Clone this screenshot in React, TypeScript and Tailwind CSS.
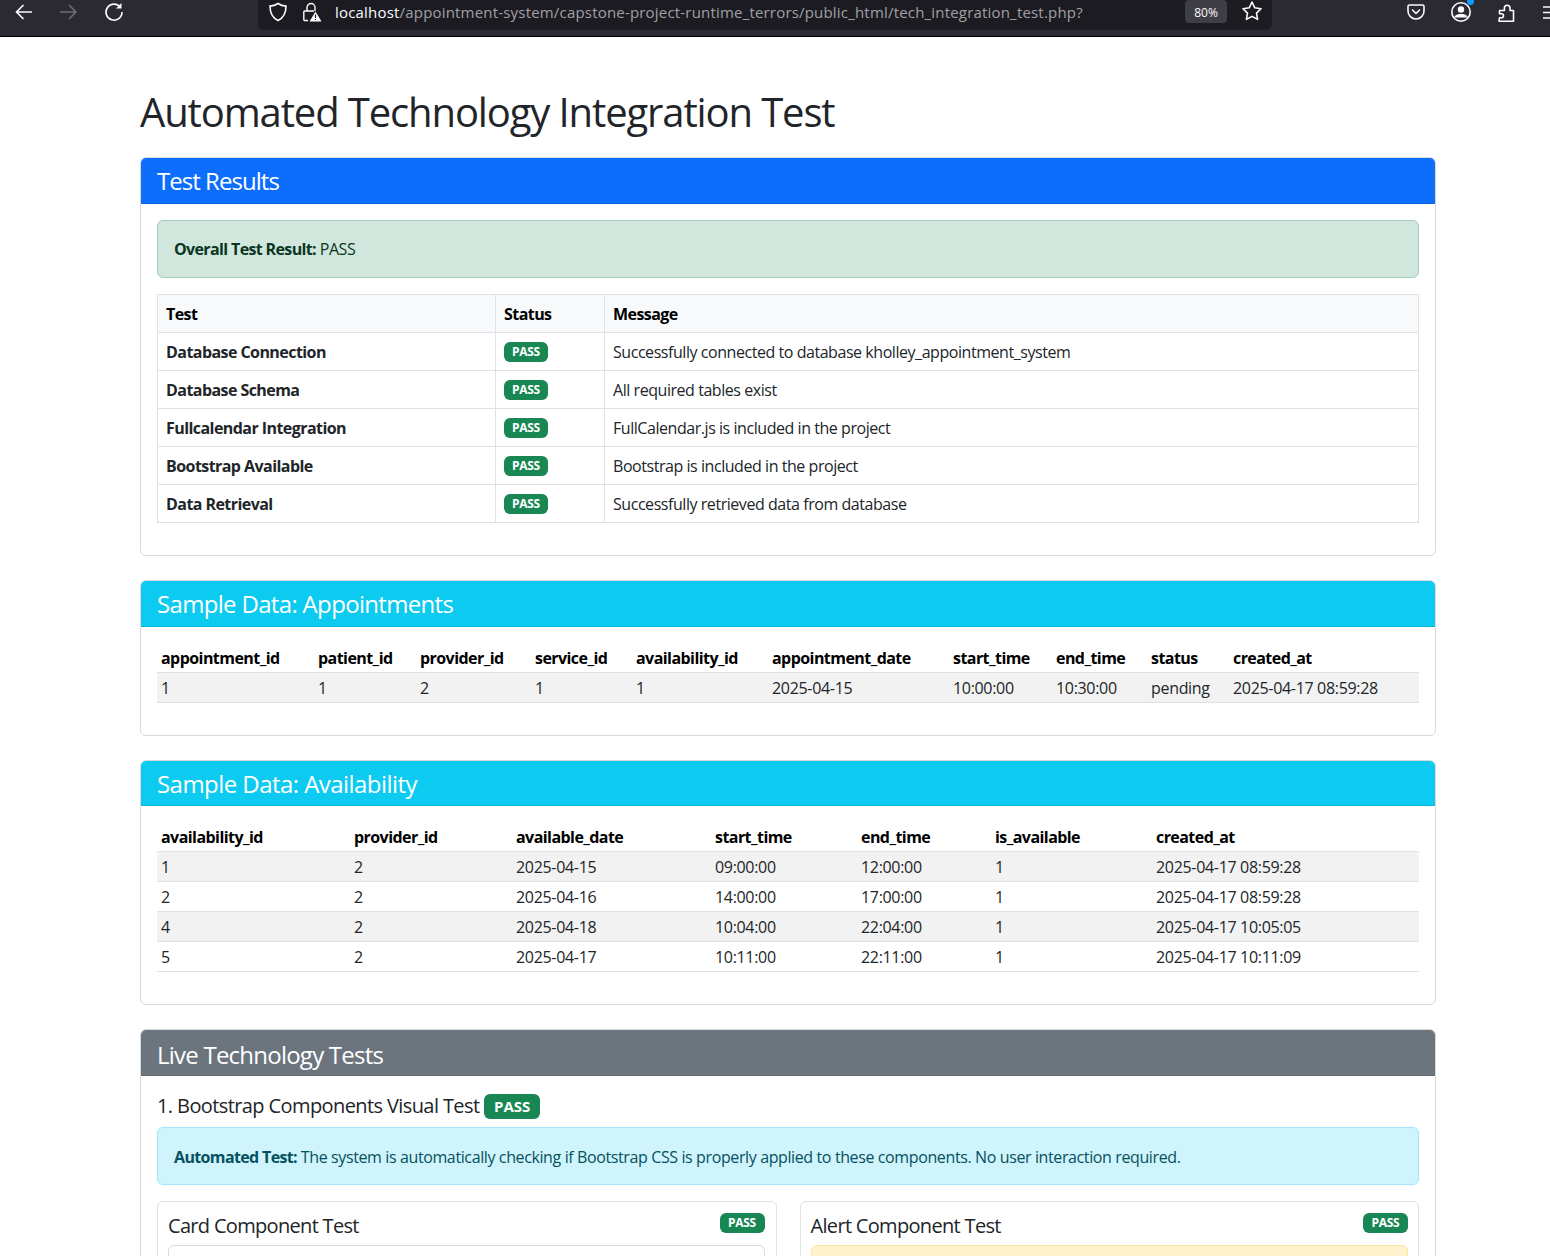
const font = "font-['Open_Sans',sans-serif]";

function BackIcon() {
  return (
    <svg width="20" height="20" viewBox="0 0 20 20" fill="none" stroke="#fbfbfe" strokeWidth="1.6" className="shrink-0">
      <path d="M18 10H2.5M9.5 3L2.5 10l7 7" />
    </svg>
  );
}

function ForwardIcon() {
  return (
    <svg width="20" height="20" viewBox="0 0 20 20" fill="none" stroke="#6e6d75" strokeWidth="1.6" className="shrink-0">
      <path d="M1 10h15.5M10 3l7 7-7 7" />
    </svg>
  );
}

function ReloadIcon() {
  return (
    <svg width="20" height="20" viewBox="0 0 20 20" fill="none" stroke="#fbfbfe" strokeWidth="1.6" className="shrink-0">
      <path d="M16.5 5.5A8 8 0 1 0 18 10" />
      <path d="M17.5 1v5.5H12" fill="#fbfbfe" stroke="none" />
    </svg>
  );
}

function ShieldIcon() {
  return (
    <svg width="20" height="20" viewBox="0 0 20 20" fill="none" stroke="#fbfbfe" strokeWidth="1.6" className="shrink-0">
      <path d="M10 1.5c2.5 1.7 5 2.4 8 2.6 0 7-2 11.700-8 14.400-6-2.700-8-7.400-8-14.400 3-.2 5.500-.9 8-2.600z" />
    </svg>
  );
}

function LockIcon() {
  return (
    <svg width="20" height="20" viewBox="0 0 20 20" fill="none" className="shrink-0">
      <path d="M5 9V5.500a4 4 0 0 1 8 0V9M6 18.500H2.800a1 1 0 0 1-1-1V10a1 1 0 0 1 1-1H12" stroke="#fbfbfe" strokeWidth="1.400" />
      <path d="M13.500 9.500l6 10h-12z" fill="#fbfbfe" />
      <path d="M13.500 12.500v3.500M13.500 17v1" stroke="#1c1b22" strokeWidth="1.200" />
    </svg>
  );
}

function StarIcon() {
  return (
    <svg width="22" height="22" viewBox="0 0 22 22" fill="none" stroke="#fbfbfe" strokeWidth="1.600" strokeLinejoin="round" className="shrink-0">
      <path d="M11 2l2.800 5.800 6.200.9-4.500 4.400 1.100 6.300L11 16.400l-5.600 3 1.100-6.300L2 8.700l6.200-.9z" />
    </svg>
  );
}

function PocketIcon() {
  return (
    <svg width="20" height="20" viewBox="0 0 20 20" fill="none" stroke="#fbfbfe" strokeWidth="1.600" strokeLinecap="round" strokeLinejoin="round" className="shrink-0">
      <path d="M3.500 3h13A1.500 1.500 0 0 1 18 4.500V9a8 8 0 0 1-16 0V4.500A1.500 1.500 0 0 1 3.500 3z" />
      <path d="M6.500 8l3.500 3.500L13.500 8" />
    </svg>
  );
}

function AccountIcon() {
  return (
    <div className="relative shrink-0">
      <svg width="22" height="22" viewBox="0 0 22 22" fill="none" className="block">
        <circle cx="11" cy="11" r="9.200" stroke="#fbfbfe" strokeWidth="1.600" />
        <circle cx="11" cy="8.500" r="3.200" fill="#fbfbfe" />
        <path d="M4.500 15.500c1.500-2 3.800-2.500 6.500-2.500s5 .5 6.500 2.500v1H4.500z" fill="#fbfbfe" />
      </svg>
      <div className="absolute -top-[3px] right-[-2px] w-[7px] h-[7px] rounded-full bg-[#0a9dff]" />
    </div>
  );
}

function ExtensionIcon() {
  return (
    <svg width="20" height="20" viewBox="0 0 20 20" fill="none" stroke="#fbfbfe" strokeWidth="1.600" strokeLinejoin="round" className="shrink-0">
      <path d="M2 19.200h14.500V8.500H13V6a2.800 2.800 0 0 0-5.600 0v2.500H2.500v3.200h2a2 2 0 0 1 0 4h-2z" />
    </svg>
  );
}

function MenuIcon() {
  return (
    <svg width="8" height="16" viewBox="0 0 8 16" fill="none" stroke="#fbfbfe" strokeWidth="1.600" className="shrink-0">
      <path d="M0 3h8M0 8.500h8M0 14h8" />
    </svg>
  );
}

function BrowserBar() {
  return (
    <div className="h-[37px] shrink-0 bg-[#2b2a33] border-b border-black flex items-start pl-[14px] overflow-hidden tracking-normal">
      <div className="flex items-center gap-[25px] h-[23px] w-[244px] shrink-0">
        <BackIcon />
        <ForwardIcon />
        <ReloadIcon />
      </div>
      <div className="w-[1014px] shrink-0 h-[30px] bg-[#1c1b22] rounded-b-[6px] flex items-start pl-[10px] pr-[9px]">
        <div className="flex items-center h-[24px] gap-[14px] w-[67px] shrink-0">
          <ShieldIcon />
          <LockIcon />
        </div>
        <div className="flex-1 h-[25px] leading-[25px] text-[15px] text-[#fbfbfe] whitespace-nowrap tracking-[0.19px]">
          localhost<span className="text-[#a0a0a5]">/appointment-system/capstone-project-runtime_terrors/public_html/tech_integration_test.php?</span>
        </div>
        <div className="h-[23px] w-[42px] bg-[#3f3e47] rounded-[4px] text-[12px] leading-[25px] text-[#fbfbfe] text-center mr-[14px] shrink-0">80%</div>
        <StarIcon />
      </div>
      <div className="flex items-center h-[23px] ml-[134px] shrink-0">
        <PocketIcon />
        <div className="ml-[24px] flex"><AccountIcon /></div>
        <div className="ml-[25px] flex"><ExtensionIcon /></div>
        <div className="ml-[26px] flex"><MenuIcon /></div>
      </div>
    </div>
  );
}

function Badge({ big, wide }: { big?: boolean; wide?: boolean }) {
  if (big) {
    return <span className="inline-block align-[1px] bg-[#198754] text-white font-bold text-[15px] leading-[15px] px-[10px] py-[5px] rounded-[6px] h-[25px] tracking-normal">PASS</span>;
  }
  return <span className={`inline-block bg-[#198754] text-white font-bold text-[12px] leading-[12px] px-[8px] py-[4px] rounded-[6px] h-[20px] text-center tracking-[-0.3px] ${wide ? "w-[45px]" : "w-[44px]"}`}>PASS</span>;
}

function Card({ title, header, children }: { title: string; header: string; children: React.ReactNode }) {
  return (
    <div className="border border-[#d9d9d9] rounded-[6px] overflow-hidden mb-[24px] bg-white shrink-0">
      <div className={`${header} px-[16px] text-white text-[24px] border-b border-black/10`}>{title}</div>
      <div className="p-[16px]">{children}</div>
    </div>
  );
}

const results = [
  ["Database Connection", "Successfully connected to database kholley_appointment_system"],
  ["Database Schema", "All required tables exist"],
  ["Fullcalendar Integration", "FullCalendar.js is included in the project"],
  ["Bootstrap Available", "Bootstrap is included in the project"],
  ["Data Retrieval", "Successfully retrieved data from database"],
];

function ResultsTable() {
  return (
    <table className="w-full table-fixed border-collapse mb-[16px] text-[16px] leading-[24px]">
      <colgroup>
        <col className="w-[338px]" />
        <col className="w-[109px]" />
        <col />
      </colgroup>
      <thead>
        <tr className="bg-[#f8f9fa] text-black h-[38px]">
          <th className="border border-[#dee2e6] px-[8px] text-left font-bold tracking-[-0.035em]">Test</th>
          <th className="border border-[#dee2e6] px-[8px] text-left font-bold tracking-[-0.035em]">Status</th>
          <th className="border border-[#dee2e6] px-[8px] text-left font-bold tracking-[-0.035em]">Message</th>
        </tr>
      </thead>
      <tbody>
        {results.map((r) => (
          <tr key={r[0]} className="h-[38px]">
            <td className="border border-[#dee2e6] px-[8px] font-bold tracking-[-0.035em]">{r[0]}</td>
            <td className="border border-[#dee2e6] px-[8px]"><div className="h-[20px] flex"><Badge /></div></td>
            <td className="border border-[#dee2e6] px-[8px]">{r[1]}</td>
          </tr>
        ))}
      </tbody>
    </table>
  );
}

function DataTable({ widths, head, rows, cell }: { widths: number[]; head: string[]; rows: string[][]; cell?: string }) {
  return (
    <table className="w-full table-fixed border-collapse mb-[16px] text-[16px] leading-[24px]">
      <colgroup>
        {widths.map((w, i) => (
          <col key={i} style={{ width: w }} />
        ))}
      </colgroup>
      <thead>
        <tr className="h-[29px] border-b border-[#dee2e6] text-black">
          {head.map((h) => (
            <th key={h} className={`px-[4px] text-left font-bold tracking-[-0.035em] ${cell ?? ""}`}>{h}</th>
          ))}
        </tr>
      </thead>
      <tbody>
        {rows.map((row, i) => (
          <tr key={i} className={`h-[30px] border-b border-[#dee2e6] ${i % 2 === 0 ? "bg-[#f2f2f2]" : ""}`}>
            {row.map((c, j) => (
              <td key={j} className={`px-[4px] whitespace-nowrap tracking-[-0.02em] ${cell ?? ""}`}>{c}</td>
            ))}
          </tr>
        ))}
      </tbody>
    </table>
  );
}

export default function App() {
  return (
    <div className={`${font} h-screen overflow-hidden flex flex-col bg-white text-[#212529] tracking-[-0.028em]`}>
      <BrowserBar />
      <div className="w-[1296px] ml-[140px] flex flex-col">
        <h1 className="text-[40px] leading-[48px] mt-[51px] mb-[21px] font-normal tracking-[-0.028em]">Automated Technology Integration Test</h1>

        <Card title="Test Results" header="bg-[#0d6efd] h-[46px] leading-[46px] tracking-[-0.04em]">
          <div className="h-[58px] bg-[#d1e7dd] border border-[#a3cfbb] rounded-[6px] text-[#0a3622] px-[16px] leading-[56px] mb-[16px]">
            <b className="tracking-[-0.04em]">Overall Test Result:</b> PASS
          </div>
          <ResultsTable />
        </Card>

        <Card title="Sample Data: Appointments" header="bg-[#0dcaf0] h-[46px] leading-[46px] tracking-[-0.028em]">
          <DataTable
            cell="pt-px"
            widths={[157, 102, 115, 101, 136, 181, 103, 95, 82, 190]}
            head={["appointment_id", "patient_id", "provider_id", "service_id", "availability_id", "appointment_date", "start_time", "end_time", "status", "created_at"]}
            rows={[["1", "1", "2", "1", "1", "2025-04-15", "10:00:00", "10:30:00", "pending", "2025-04-17 08:59:28"]]}
          />
        </Card>

        <Card title="Sample Data: Availability" header="bg-[#0dcaf0] h-[45px] leading-[46px] mb-px tracking-[-0.023em]">
          <DataTable
            widths={[193, 162, 199, 146, 134, 161, 267]}
            head={["availability_id", "provider_id", "available_date", "start_time", "end_time", "is_available", "created_at"]}
            rows={[
              ["1", "2", "2025-04-15", "09:00:00", "12:00:00", "1", "2025-04-17 08:59:28"],
              ["2", "2", "2025-04-16", "14:00:00", "17:00:00", "1", "2025-04-17 08:59:28"],
              ["4", "2", "2025-04-18", "10:04:00", "22:04:00", "1", "2025-04-17 10:05:05"],
              ["5", "2", "2025-04-17", "10:11:00", "22:11:00", "1", "2025-04-17 10:11:09"],
            ]}
          />
        </Card>

        <Card title="Live Technology Tests" header="bg-[#6c757d] h-[46px] leading-[50px] tracking-[-0.032em]">
          <h4 className="text-[20px] leading-[24px] font-normal mt-[2px] mb-[8px] tracking-[-0.03em]">1. Bootstrap Components Visual Test <Badge big /></h4>
          <div className="h-[58px] bg-[#cff4fc] border border-[#9eeaf9] rounded-[6px] text-[#055160] px-[16px] leading-[58px] mb-[16px] whitespace-nowrap tracking-[-0.024em]">
            <b className="tracking-[-0.04em]">Automated Test:</b> The system is automatically checking if Bootstrap CSS is properly applied to these components. No user interaction required.
          </div>
          <div className="grid grid-cols-2 gap-[23px]">
            <div className="border border-[#dee2e6] rounded-[6px] p-[10px] pt-[11px] pr-[11px]">
              <div className="flex justify-between items-start mb-[6px]">
                <div className="text-[20px] leading-[26px] tracking-[-0.034em]">Card Component Test</div>
                <Badge wide />
              </div>
              <div className="h-[120px] border border-[#d9d9d9] rounded-[6px]" />
            </div>
            <div className="border border-[#dee2e6] rounded-[6px] p-[10px] pt-[11px]">
              <div className="flex justify-between items-start mb-[6px]">
                <div className="text-[20px] leading-[26px] tracking-[-0.034em]">Alert Component Test</div>
                <Badge wide />
              </div>
              <div className="h-[120px] bg-[#fff3cd] border border-[#ffe69c] rounded-[6px]" />
            </div>
          </div>
        </Card>
      </div>
    </div>
  );
}
